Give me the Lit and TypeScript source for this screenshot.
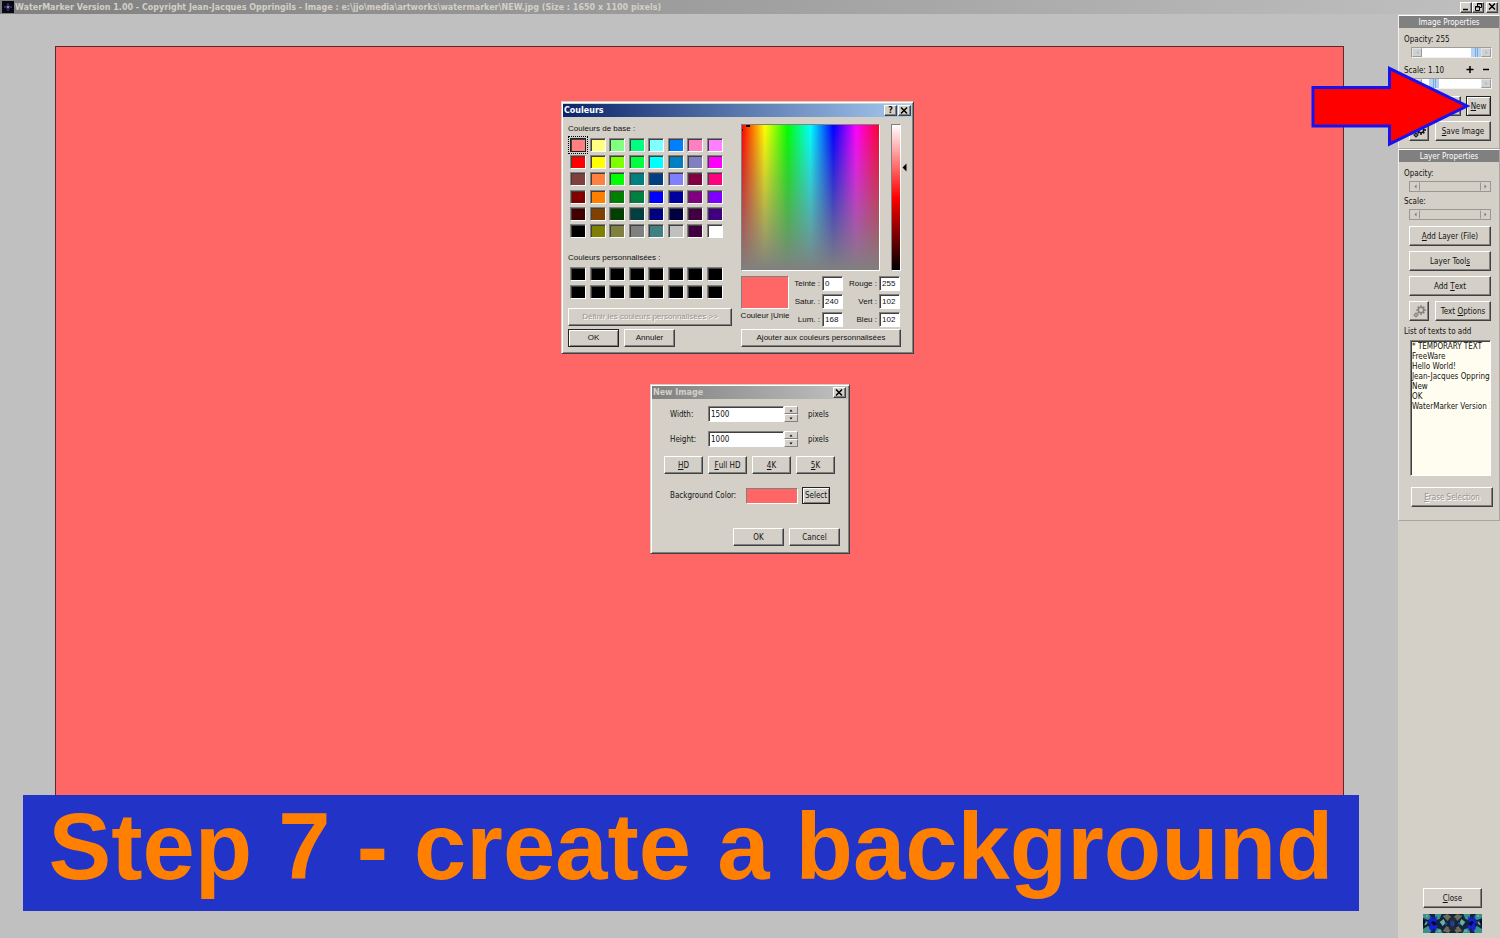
import { LitElement, html, css, svg } from "lit";
import { customElement, property } from "lit/decorators.js";

const base = css`
  * { box-sizing: border-box; }
  button, input, select {
    font: inherit; color: inherit; margin: 0; padding: 0; border-radius: 0; min-width: 0;
  }
  button {
    background: #d4d0c8; border: 1px solid; border-color: #fff #404040 #404040 #fff;
    box-shadow: inset -1px -1px 0 #808080; display: flex; align-items: center;
    justify-content: center; white-space: pre; line-height: 10px; color: #111;
  }
  button.default { border-color: #222; box-shadow: inset 1px 1px 0 #fff, inset -1px -1px 0 #808080; }
  button:disabled { color: #97948e; text-shadow: 1px 1px 0 #fff; }
  svg { display: block; }
`;

const closeIcon = html`<svg width="9" height="8" viewBox="0 0 9 8"><path d="M1 .5 7 6.500M7 .5 1 6.500" stroke="#000" stroke-width="1.500" fill="none"/></svg>`;

const gear = (color: string) => html`<svg width="15" height="15" viewBox="0 0 15 15" fill="none" stroke=${color}>
  <circle cx="9" cy="6" r="2.700" stroke-width="1.500"/>
  <path d="M9 1.200v2M9 9v2M4.200 6h2M12 6h2M5.600 2.600 7 4M11 8l1.400 1.400M12.400 2.600 11 4M7 8 5.600 9.400" stroke-width="1.500"/>
  <circle cx="4" cy="11" r="1.400" stroke-width="1.200"/>
  <path d="M4 8.400v1.200M4 12.400v1.200M1.400 11h1.200M5.400 11h1.200" stroke-width="1.200"/>
</svg>`;

@customElement("scroll-slider")
class ScrollSlider extends LitElement {
  @property() label = "";
  @property({ type: Number }) value = 0;
  @property({ type: Number }) max = 100;
  @property({ type: Boolean }) disabled = false;

  static styles = [base, css`
    :host { display: block; }
    .bar { display: flex; height: 11px; border: 1px solid; border-color: #a09d97 #f4f2ee #f4f2ee #a09d97; background: #fff; }
    .bar button { width: 10px; flex: none; border-color: #e6e4e0 #9a9a9a #9a9a9a #e6e4e0; box-shadow: none; background: #cfd2d4; }
    .bar input { flex: 1; width: 0; height: 9px; appearance: none; background: transparent; }
    .bar input::-webkit-slider-thumb {
      appearance: none; width: 10px; height: 9px; border: 0;
      background: linear-gradient(90deg, #b4d4f4 0 4px, #7fa8d8 4px 5px, #b4d4f4 5px 6px, #7fa8d8 6px 7px, #b4d4f4 7px);
    }
    .bar.off { background: #d4d0c8; border-color: #9a9790; }
    .bar.off button { background: #d4d0c8; border-color: #d4d0c8 #9a9790 #d4d0c8 #d4d0c8; }
    .bar.off button:last-child { border-color: #d4d0c8 #d4d0c8 #d4d0c8 #9a9790; }
    .bar.off input::-webkit-slider-thumb { background: transparent; }
  `];

  render() {
    const c = this.disabled ? "#777" : "#b4b8bc";
    return html`<div class="bar ${this.disabled ? "off" : ""}">
      <button aria-label="Decrease" ?disabled=${this.disabled}><svg width="5" height="5"><path d="M3.500 .5v4L1.500 2.500z" fill=${c}/></svg></button>
      <input type="range" aria-label=${this.label} min="0" .max=${String(this.max)} .value=${String(this.value)} ?disabled=${this.disabled}>
      <button aria-label="Increase" ?disabled=${this.disabled}><svg width="5" height="5"><path d="M1.500 .5v4L3.500 2.500z" fill=${c}/></svg></button>
    </div>`;
  }
}

const BASIC = [
  "#ff8080 #ffff80 #80ff80 #00ff80 #80ffff #0080ff #ff80c0 #ff80ff",
  "#ff0000 #ffff00 #80ff00 #00ff40 #00ffff #0080c0 #8080c0 #ff00ff",
  "#804040 #ff8040 #00ff00 #008080 #004080 #8080ff #800040 #ff0080",
  "#800000 #ff8000 #008000 #008040 #0000ff #0000a0 #800080 #8000ff",
  "#400000 #804000 #004000 #004040 #000080 #000040 #400040 #400080",
  "#000000 #808000 #808040 #808080 #408080 #c0c0c0 #400040 #ffffff",
].join(" ").split(" ");
const CUSTOM = Array(16).fill("#000000");

const windowStyles = css`
  :host {
    display: flex; flex-direction: column; background: #d4d0c8; color: #111; line-height: 10px;
    border: 1px solid; border-color: #d4d0c8 #404040 #404040 #d4d0c8;
    box-shadow: inset 1px 1px 0 #fff, inset -1px -1px 0 #808080;
  }
  .title {
    display: flex; align-items: center; height: 13px; padding: 0 1px; gap: 1px;
    font: bold 8px/13px "DejaVu Sans", sans-serif;
  }
  .title span { flex: 1; }
  .title button { width: 13px; height: 11px; }
  .sunk { border: 1px solid; border-color: #808080 #fff #fff #808080; }
  .field { background: #fff; border: 1px solid; border-color: #808080 #fff #fff #808080; box-shadow: inset 1px 1px 0 #404040; padding-left: 2px; height: 15px; width: 100%; }
`;

@customElement("color-dialog")
class ColorDialog extends LitElement {
  static styles = [base, windowStyles, css`
    :host { width: 353px; padding: 2px 1px 6px; font-family: "Liberation Sans", Arial, sans-serif; font-size: 8px; }
    .title { background: linear-gradient(90deg, #0a246a, #a6caf0); color: #fff; }
    .body { display: flex; gap: 9px; padding: 7px 0 0 5px; }
    .left { width: 164px; flex: none; display: flex; flex-direction: column; }
    .swatches { display: grid; grid-template-columns: repeat(8, 16px); justify-content: space-between; align-content: space-between; width: 153px; margin: 4px 0 15px 2px; height: 100px; }
    .swatches.custom { height: 32px; margin: 4px 0 9px 2px; }
    .swatches button { height: 14px; border-color: #808080 #fff #fff #808080; box-shadow: inset 1px 1px 0 #404040; }
    .swatches button.on { outline: 1px dotted #000; outline-offset: 1px; border-color: #222; }
    .row { display: flex; gap: 5px; margin-top: 3px; }
    .row button { width: 51px; }
    .left button.wide, .row button, .add { height: 18px; }
    .right { width: 168px; flex: none; display: flex; flex-direction: column; }
    .pick { display: flex; height: 147px; margin-bottom: 5px; }
    .spectrum {
      width: 139px; flex: none;
      background: linear-gradient(rgba(128,128,128,0), #808080),
        linear-gradient(90deg, #f00, #ff0, #0f0, #0ff, #00f, #f0f, #ff0030);
    }
    .lum { width: 10px; flex: none; margin-left: 11px; background: linear-gradient(#fff, #f00 50%, #000); }
    .pointer { margin: 39px 0 0 1px; }
    .values { display: grid; grid-template-columns: 48px 33px 21px 36px 21px; grid-template-rows: repeat(3, 15px); gap: 3px 0; align-items: center; margin-bottom: 2px; }
    .values label { text-align: right; padding-right: 2px; white-space: nowrap; }
    .solid { grid-row: 1 / 4; align-self: stretch; display: flex; flex-direction: column; align-items: center; gap: 2px; white-space: nowrap; }
    .preview { width: 48px; height: 33px; background: #ff6666; }
    .add { width: 160px; }
  `];

  field(id: string, label: string, value: string) {
    return html`<label for=${id}>${label} :</label><input class="field" id=${id} .value=${value}>`;
  }

  render() {
    return html`
      <div class="title"><span>Couleurs</span>
        <button aria-label="Aide">?</button><button aria-label="Fermer">${closeIcon}</button></div>
      <div class="body">
        <div class="left">
          <div>Couleurs de base :</div>
          <div class="swatches">${BASIC.map((c, i) => html`<button class=${i ? "" : "on"} aria-label=${c} style="background:${c}"></button>`)}</div>
          <div>Couleurs personnalisées :</div>
          <div class="swatches custom">${CUSTOM.map((c) => html`<button aria-label=${c} style="background:${c}"></button>`)}</div>
          <button class="wide" disabled>Définir les couleurs personnalisées &gt;&gt;</button>
          <div class="row"><button class="default">OK</button><button>Annuler</button></div>
        </div>
        <div class="right">
          <div class="pick">
            <div class="spectrum sunk"><svg width="12" height="9"><path d="M4 1h4M0 5h1" stroke="#000" stroke-width="2"/></svg></div>
            <div class="lum sunk"></div>
            <svg class="pointer" width="5" height="9"><path d="M4.500 .5v8L.5 4.500z"/></svg>
          </div>
          <div class="values">
            <div class="solid"><div class="preview sunk"></div><div>Couleur |Unie</div></div>
            ${this.field("hue", "Teinte", "0")}${this.field("red", "Rouge", "255")}
            ${this.field("sat", "Satur.", "240")}${this.field("green", "Vert", "102")}
            ${this.field("lum", "Lum.", "168")}${this.field("blue", "Bleu", "102")}
          </div>
          <button class="add">Ajouter aux couleurs personnalisées</button>
        </div>
      </div>`;
  }
}

@customElement("new-image-dialog")
class NewImageDialog extends LitElement {
  static styles = [base, windowStyles, css`
    :host { width: 200px; padding: 1px 1px 7px; }
    .title { background: linear-gradient(90deg, #808080, #c0c0c0); color: #d4d0c8; padding-right: 2px; }
    .body { display: flex; flex-direction: column; gap: 9px; padding: 7px 8px 0 12px; }
    .body button, .size label, .size span, .color span { padding-top: 1px; }
    .size { display: flex; align-items: center; padding-left: 6px; height: 16px; }
    .size label { width: 38px; flex: none; }
    .size .field { width: 76px; flex: none; height: 16px; padding-top: 1px; }
    .spin { width: 14px; display: flex; flex-direction: column; margin-right: 10px; }
    .spin button { height: 8px; padding: 0; border-color: #fff #808080 #808080 #fff; box-shadow: none; }
    .presets { display: flex; gap: 5px; }
    .presets button { width: 39px; flex: none; height: 18px; }
    .color { display: flex; align-items: center; padding: 4px 0 0 6px; }
    .color span { width: 76px; }
    .chip { width: 52px; height: 16px; background: #ff6666; margin-right: 4px; }
    .color button { width: 28px; height: 17px; padding-top: 0; }
    .actions { display: flex; justify-content: flex-end; gap: 5px; padding-top: 15px; }
    .actions button { width: 51px; height: 18px; }
  `];

  size(label: string, value: string) {
    return html`<div class="size"><label for=${label}>${label}:</label><input class="field" id=${label} .value=${value}>
      <div class="spin">
        <button aria-label="Increase"><svg width="4" height="3"><path d="M.5 2.500h3L2 .5z"/></svg></button>
        <button aria-label="Decrease"><svg width="4" height="3"><path d="M.5 .5h3L2 2.500z"/></svg></button>
      </div><span>pixels</span></div>`;
  }

  render() {
    return html`
      <div class="title"><span>New Image</span><button aria-label="Close">${closeIcon}</button></div>
      <div class="body">
        ${this.size("Width", "1500")}${this.size("Height", "1000")}
        <div class="presets"><button><u>H</u>D</button><button><u>F</u>ull HD</button><button><u>4</u>K</button><button><u>5</u>K</button></div>
        <div class="color"><span>Background Color:</span><div class="chip sunk"></div><button class="default">Select</button></div>
        <div class="actions"><button>OK</button><button>Cancel</button></div>
      </div>`;
  }
}

const TEXTS = ["* TEMPORARY TEXT", "FreeWare", "Hello World!", "Jean-Jacques Oppringils", "New", "OK", "WaterMarker Version 1.00"];

const logoHalf = svg`
  <path d="M0 0h6l3 4-4 2-5-2zM12 0h7l-2 5-4 1zM0 15l5-3 5 3-3 4H0zM13 14l5 1 2 4h-8z" fill="#3d8f8b"/>
  <path d="M1 7l4 1-2 3-3-1zM17 8l4-3 2 4-3 3zM3 1h2v2H3zM15 16h3v2h-3z" fill="#6fae9f"/>
  <path d="M7 2l3 3V2l2 3 2-3v5l-3 2 4 3-2 5-2-3-2 4-3-4 2-4-4-2 3-2z" fill="#1420d8"/>
  <path d="M8 8l3-1 3 3-3 2zM0 5l3 3-3 4z" fill="#060938"/>
  <path d="M20 2l5-2 4 3-4 4zM20 17l4-5 5 3-3 4z" fill="#6c6a59"/>
  <path d="M26 5l4-3v15l-4-2 2-5z" fill="#252a31"/>
  <path d="M22 8l3 1-2 3zM28 8l2-2v7l-2-2z" fill="#2445a0"/>`;

@customElement("app-root")
class AppRoot extends LitElement {
  static styles = [base, css`
    :host {
      display: flex; flex-direction: column; height: 100vh; position: relative; overflow: hidden;
      font-family: "DejaVu Sans Condensed", "DejaVu Sans", sans-serif; font-size: 8px; line-height: 10px; color: #111;
      background: #c0c0c0; border-bottom: 1px solid #e6e6e4;
    }
    .titlebar {
      display: flex; align-items: center; height: 14px; flex: none; padding: 0 2px; gap: 1px;
      background: linear-gradient(90deg, #808080, #c0c0c0); color: #d4d0c8;
      font: bold 8px/13px "DejaVu Sans", sans-serif;
    }
    .titlebar h1 { font: inherit; margin: 0; padding-top: 1px; flex: 1; white-space: nowrap; }
    .winbtns { display: flex; }
    .winbtns button { width: 12px; height: 11px; }
    .winbtns button:last-child { margin-left: 2px; }
    .main { flex: 1; display: flex; min-height: 0; }
    .workspace { flex: 1; padding: 32px 54px 0 55px; min-width: 0; }
    .canvas { aspect-ratio: 3 / 2; background: #ff6666; border: 1px solid #5a2a2a; }
    .side { width: 102px; flex: none; background: #d4d0c8; display: flex; flex-direction: column; padding-top: 1px; }
    .panel { display: flex; flex-direction: column; border: 1px solid; border-color: #fff #a8a59f #a8a59f #f2f0ec; }
    .panel h2 { margin: 0; font: inherit; line-height: 11px; padding-top: 1px; background: #808080; color: #fff; text-align: center; }
    .in { display: flex; flex-direction: column; padding: 7px 8px 7px 5px; }
    .in.layer { padding-bottom: 13px; }
    .in scroll-slider { margin: 2px 0 0 5px; }
    .in.image scroll-slider { margin: 2px -1px 0 7px; }
    .in button { height: 20px; padding-top: 1px; }
    .row { display: flex; justify-content: space-between; margin: 5px 0 0 5px; }
    .row .sq { width: 20px; }
    .row .rest { width: 56px; }
    .row .open { width: 52px; }
    .row .new { width: 25px; }
    .image .row.first { margin-top: 7px; }
    .scale { display: flex; align-items: center; justify-content: space-between; margin-top: 8px; height: 10px; }
    .scale span:last-child { display: flex; gap: 7px; }
    .scale .pm { border: 0; background: none; box-shadow: none; width: 9px; height: 11px; padding: 0 0 3px; }
    .stack { display: flex; flex-direction: column; gap: 5px; margin: 6px 0 0 5px; }
    .gap { margin-top: 5px; }
    .listlabel { margin-top: 5px; padding-top: 1px; white-space: nowrap; }
    select {
      margin: 3px 0 11px 6px; height: 136px; background: #fffdf0; overflow: hidden; border: 1px solid;
      border-color: #808080 #fff #fff #808080; box-shadow: inset 1px 1px 0 #404040; padding: 1px 0 0 1px; outline: 0;
    }
    option { padding: 0; min-height: 10px; line-height: 10px; height: 10px; margin: 0; }
    .in .erase { margin: 0 -2px 0 7px; }
    .foot { margin: auto 18px 5px 25px; display: flex; flex-direction: column; gap: 6px; }
    .foot button { height: 20px; padding-top: 1px; }
    color-dialog { position: absolute; left: 561px; top: 101px; }
    new-image-dialog { position: absolute; left: 650px; top: 384px; }
    .arrow { position: absolute; right: 29px; top: 65px; }
    .banner {
      position: absolute; left: 23px; right: 141px; top: 795px; height: 116px; margin: 0; background: #2233c8; color: #ff8000;
      font: bold 94px/104px "Liberation Sans", Arial, sans-serif; text-align: center; white-space: nowrap;
    }
  `];

  render() {
    return html`
      <header class="titlebar">
        <svg width="12" height="12" viewBox="0 0 12 12"><rect width="12" height="12" fill="#080812"/><path d="M6 2v8M2 6h8" stroke="#55509a"/><path d="M4 4l4 4M8 4 4 8" stroke="#2c2a60"/><circle cx="6" cy="6" r="1" fill="#a8a0dc"/></svg>
        <h1>WaterMarker Version 1.00 - Copyright Jean-Jacques Oppringils - Image : e:\\jjo\\media\\artworks\\watermarker\\NEW.jpg (Size : 1650 x 1100 pixels)</h1>
        <div class="winbtns">
          <button aria-label="Minimize"><svg width="8" height="8"><path d="M1 6.500h5" stroke="#000" stroke-width="1.500"/></svg></button>
          <button aria-label="Restore"><svg width="9" height="8" fill="none" stroke="#000"><path d="M3.500 3V.5h4v4H6M3 1h5M1.500 3.500h4v4h-4zM1 4h5"/></svg></button>
          <button aria-label="Close window">${closeIcon}</button>
        </div>
      </header>
      <div class="main">
        <main class="workspace"><div class="canvas"></div></main>
        <aside class="side">
          <section class="panel">
            <h2>Image Properties</h2>
            <div class="in image">
              <div>Opacity: 255</div>
              <scroll-slider label="Image opacity" max="255" value="255"></scroll-slider>
              <div class="scale"><span>Scale: 1.10</span><span>
                <button class="pm" aria-label="Scale up"><svg width="9" height="9"><path d="M4 1v7M.5 4.500h7" stroke="#000" stroke-width="1.500"/></svg></button>
                <button class="pm" aria-label="Scale down"><svg width="9" height="9"><path d="M1 4.500h6" stroke="#000" stroke-width="1.500"/></svg></button></span></div>
              <scroll-slider label="Image scale" max="100" value="14"></scroll-slider>
              <div class="row first"><button class="open" aria-label="Open image"></button><button class="new default"><u>N</u>ew</button></div>
              <div class="row"><button class="sq" aria-label="Image settings">${gear("#111")}</button><button class="rest"><u>S</u>ave Image</button></div>
            </div>
          </section>
          <section class="panel">
            <h2>Layer Properties</h2>
            <div class="in layer">
              <div>Opacity:</div>
              <scroll-slider label="Layer opacity" disabled></scroll-slider>
              <div class="gap">Scale:</div>
              <scroll-slider label="Layer scale" disabled></scroll-slider>
              <div class="stack">
                <button><u>A</u>dd Layer (File)</button>
                <button>Layer Tool<u>s</u></button>
                <button>Add <u>T</u>ext</button>
              </div>
              <div class="row"><button class="sq" aria-label="Text settings">${gear("#85827c")}</button><button class="rest">Text <u>O</u>ptions</button></div>
              <label class="listlabel" for="texts">List of texts to add</label>
              <select id="texts" size="13" multiple>${TEXTS.map((t) => html`<option>${t}</option>`)}</select>
              <button class="erase" disabled><u>E</u>rase Selection</button>
            </div>
          </section>
          <div class="foot">
            <button><u>C</u>lose</button>
            <svg width="59" height="19" viewBox="0 0 60 19" preserveAspectRatio="none"><rect width="60" height="19" fill="#10243c"/>${logoHalf}<g transform="translate(60 0) scale(-1 1)">${logoHalf}</g></svg>
          </div>
        </aside>
      </div>
      <color-dialog></color-dialog>
      <new-image-dialog></new-image-dialog>
      <svg class="arrow" width="161" height="83" viewBox="1310 65 161 83"><path d="M1313 87.500h76.500V68.500L1467 106l-77.500 38V126H1313z" fill="#f00" stroke="#1414f0" stroke-width="3"/></svg>
      <h2 class="banner">Step 7 - create a background</h2>`;
  }
}
